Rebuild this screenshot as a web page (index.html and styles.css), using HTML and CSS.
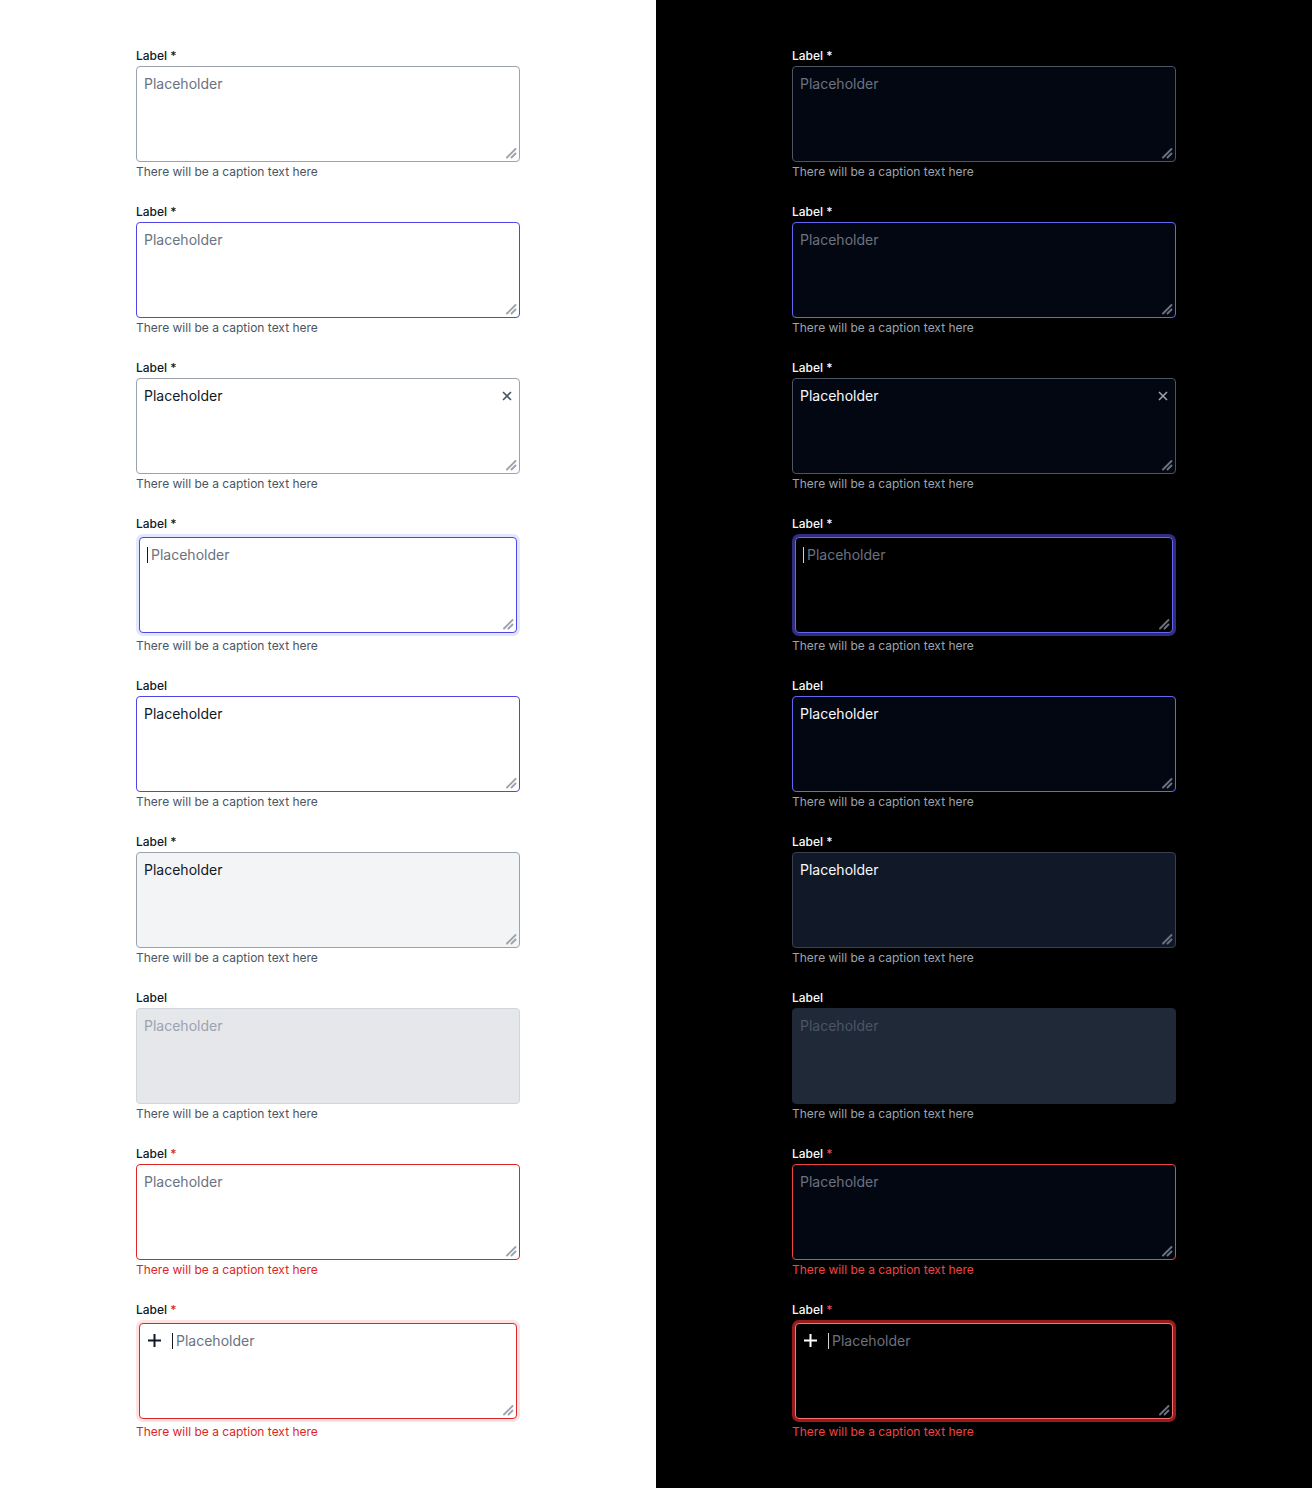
FILE: index.html
```html
<!DOCTYPE html>
<html lang="en">
<head>
<meta charset="utf-8">
<title>Textarea states</title>
<link rel="stylesheet" href="styles.css">
</head>
<body>
<div class="page">
  <section class="half light">
    <div class="field">
      <div class="label">Label <span class="req">*</span></div>
      <div class="box"><span class="ph">Placeholder</span><svg class="grip" width="12" height="12" viewBox="0 0 12 12"><path d="M10.5 2L2 10.5M10.5 6.5L6.5 10.5"/></svg></div>
      <div class="caption">There will be a caption text here</div>
    </div>
    <div class="field">
      <div class="label">Label <span class="req">*</span></div>
      <div class="box hover"><span class="ph">Placeholder</span><svg class="grip" width="12" height="12" viewBox="0 0 12 12"><path d="M10.5 2L2 10.5M10.5 6.5L6.5 10.5"/></svg></div>
      <div class="caption">There will be a caption text here</div>
    </div>
    <div class="field">
      <div class="label">Label <span class="req">*</span></div>
      <div class="box"><span class="val">Placeholder</span><svg class="clear" width="10" height="10" viewBox="0 0 10 10"><path d="M1 1L9 9M9 1L1 9"/></svg><svg class="grip" width="12" height="12" viewBox="0 0 12 12"><path d="M10.5 2L2 10.5M10.5 6.5L6.5 10.5"/></svg></div>
      <div class="caption">There will be a caption text here</div>
    </div>
    <div class="field">
      <div class="label">Label <span class="req">*</span></div>
      <div class="box focus"><span class="caret"></span><span class="ph">Placeholder</span><svg class="grip" width="12" height="12" viewBox="0 0 12 12"><path d="M10.5 2L2 10.5M10.5 6.5L6.5 10.5"/></svg></div>
      <div class="caption">There will be a caption text here</div>
    </div>
    <div class="field">
      <div class="label">Label</div>
      <div class="box hover"><span class="val">Placeholder</span><svg class="grip" width="12" height="12" viewBox="0 0 12 12"><path d="M10.5 2L2 10.5M10.5 6.5L6.5 10.5"/></svg></div>
      <div class="caption">There will be a caption text here</div>
    </div>
    <div class="field">
      <div class="label">Label <span class="req">*</span></div>
      <div class="box readonly"><span class="val">Placeholder</span><svg class="grip" width="12" height="12" viewBox="0 0 12 12"><path d="M10.5 2L2 10.5M10.5 6.5L6.5 10.5"/></svg></div>
      <div class="caption">There will be a caption text here</div>
    </div>
    <div class="field">
      <div class="label">Label</div>
      <div class="box disabled"><span class="ph">Placeholder</span></div>
      <div class="caption">There will be a caption text here</div>
    </div>
    <div class="field">
      <div class="label">Label <span class="req err">*</span></div>
      <div class="box error"><span class="ph">Placeholder</span><svg class="grip" width="12" height="12" viewBox="0 0 12 12"><path d="M10.5 2L2 10.5M10.5 6.5L6.5 10.5"/></svg></div>
      <div class="caption err">There will be a caption text here</div>
    </div>
    <div class="field">
      <div class="label">Label <span class="req err">*</span></div>
      <div class="box error-focus"><svg class="plus" width="13" height="13" viewBox="0 0 13 13"><path d="M6.5 0V13M0 6.5H13"/></svg><span class="caret"></span><span class="ph">Placeholder</span><svg class="grip" width="12" height="12" viewBox="0 0 12 12"><path d="M10.5 2L2 10.5M10.5 6.5L6.5 10.5"/></svg></div>
      <div class="caption err">There will be a caption text here</div>
    </div>
  </section>

  <section class="half dark">
    <div class="field">
      <div class="label">Label <span class="req">*</span></div>
      <div class="box"><span class="ph">Placeholder</span><svg class="grip" width="12" height="12" viewBox="0 0 12 12"><path d="M10.5 2L2 10.5M10.5 6.5L6.5 10.5"/></svg></div>
      <div class="caption">There will be a caption text here</div>
    </div>
    <div class="field">
      <div class="label">Label <span class="req">*</span></div>
      <div class="box hover"><span class="ph">Placeholder</span><svg class="grip" width="12" height="12" viewBox="0 0 12 12"><path d="M10.5 2L2 10.5M10.5 6.5L6.5 10.5"/></svg></div>
      <div class="caption">There will be a caption text here</div>
    </div>
    <div class="field">
      <div class="label">Label <span class="req">*</span></div>
      <div class="box"><span class="val">Placeholder</span><svg class="clear" width="10" height="10" viewBox="0 0 10 10"><path d="M1 1L9 9M9 1L1 9"/></svg><svg class="grip" width="12" height="12" viewBox="0 0 12 12"><path d="M10.5 2L2 10.5M10.5 6.5L6.5 10.5"/></svg></div>
      <div class="caption">There will be a caption text here</div>
    </div>
    <div class="field">
      <div class="label">Label <span class="req">*</span></div>
      <div class="box focus"><span class="caret"></span><span class="ph">Placeholder</span><svg class="grip" width="12" height="12" viewBox="0 0 12 12"><path d="M10.5 2L2 10.5M10.5 6.5L6.5 10.5"/></svg></div>
      <div class="caption">There will be a caption text here</div>
    </div>
    <div class="field">
      <div class="label">Label</div>
      <div class="box hover"><span class="val">Placeholder</span><svg class="grip" width="12" height="12" viewBox="0 0 12 12"><path d="M10.5 2L2 10.5M10.5 6.5L6.5 10.5"/></svg></div>
      <div class="caption">There will be a caption text here</div>
    </div>
    <div class="field">
      <div class="label">Label <span class="req">*</span></div>
      <div class="box readonly"><span class="val">Placeholder</span><svg class="grip" width="12" height="12" viewBox="0 0 12 12"><path d="M10.5 2L2 10.5M10.5 6.5L6.5 10.5"/></svg></div>
      <div class="caption">There will be a caption text here</div>
    </div>
    <div class="field">
      <div class="label">Label</div>
      <div class="box disabled"><span class="ph">Placeholder</span></div>
      <div class="caption">There will be a caption text here</div>
    </div>
    <div class="field">
      <div class="label">Label <span class="req err">*</span></div>
      <div class="box error"><span class="ph">Placeholder</span><svg class="grip" width="12" height="12" viewBox="0 0 12 12"><path d="M10.5 2L2 10.5M10.5 6.5L6.5 10.5"/></svg></div>
      <div class="caption err">There will be a caption text here</div>
    </div>
    <div class="field">
      <div class="label">Label <span class="req err">*</span></div>
      <div class="box error-focus"><svg class="plus" width="13" height="13" viewBox="0 0 13 13"><path d="M6.5 0V13M0 6.5H13"/></svg><span class="caret"></span><span class="ph">Placeholder</span><svg class="grip" width="12" height="12" viewBox="0 0 12 12"><path d="M10.5 2L2 10.5M10.5 6.5L6.5 10.5"/></svg></div>
      <div class="caption err">There will be a caption text here</div>
    </div>
  </section>
</div>
</body>
</html>
```

FILE: styles.css
```css
* { box-sizing: border-box; }

html, body {
  margin: 0;
  padding: 0;
}

body {
  font-family: Inter, "Noto Sans", "Liberation Sans", sans-serif;
  -webkit-font-smoothing: antialiased;
}

.page {
  display: grid;
  grid-template-columns: 656px 656px;
  width: 1312px;
  min-height: 1488px;
}

.half {
  display: flex;
  flex-direction: column;
  gap: 24px;
  padding: 48px 136px;
}

.field {
  display: flex;
  flex-direction: column;
  gap: 2px;
  width: 384px;
}

.label {
  font-size: 12px;
  line-height: 16px;
  font-weight: 500;
}

.caption {
  font-size: 12px;
  line-height: 16px;
  font-weight: 400;
}

.box {
  position: relative;
  display: flex;
  align-items: flex-start;
  align-self: stretch;
  height: 96px;
  padding: 7px 7px;
  border: 1px solid;
  border-radius: 4px;
  font-size: 14px;
  line-height: 20px;
}

.box.focus,
.box.error-focus {
  margin: 3px;
}

.ph, .val { white-space: nowrap; }

.caret {
  display: inline-block;
  width: 1px;
  height: 16px;
  margin-top: 2px;
  margin-right: 3px;
}

.plus {
  margin-top: 3px;
  margin-left: 1px;
  margin-right: 11px;
  fill: none;
  stroke-width: 2;
}

.grip {
  position: absolute;
  right: 2px;
  bottom: 2px;
  fill: none;
  stroke-width: 1.9;
  stroke-linecap: round;
}

.clear {
  position: absolute;
  right: 7px;
  top: 12px;
  fill: none;
  stroke-width: 1.6;
}

/* ---------- light ---------- */
.light { background: #ffffff; }
.light .label { color: #111827; }
.light .req { color: #111827; }
.light .req.err { color: #dc2626; }
.light .caption { color: #4b5563; }
.light .caption.err { color: #dc2626; }
.light .box { background: #ffffff; border-color: #9ca3af; }
.light .ph { color: #6b7280; }
.light .val { color: #111827; }
.light .caret { background: #111827; }
.light .plus { stroke: #111827; }
.light .grip { stroke: #9ca3af; }
.light .clear { stroke: #4b5563; }
.light .box.hover { border-color: #4f46e5; }
.light .box.focus { border-color: #4f46e5; box-shadow: 0 0 0 3px #e0e7ff; }
.light .box.readonly { background: #f3f4f6; }
.light .box.disabled { background: #e5e7eb; border-color: #d1d5db; }
.light .box.disabled .ph { color: #9ca3af; }
.light .box.error { border-color: #dc2626; }
.light .box.error-focus { border-color: #dc2626; box-shadow: 0 0 0 3px #fee2e2; }

/* ---------- dark ---------- */
.dark { background: #000000; }
.dark .label { color: #f9fafb; }
.dark .req { color: #f9fafb; }
.dark .req.err { color: #ef4444; }
.dark .caption { color: #9ca3af; }
.dark .caption.err { color: #ef4444; }
.dark .box { background: #030712; border-color: #4b5563; }
.dark .ph { color: #6b7280; }
.dark .val { color: #f9fafb; }
.dark .caret { background: #d1d5db; }
.dark .plus { stroke: #ffffff; }
.dark .grip { stroke: #6b7280; }
.dark .clear { stroke: #9ca3af; }
.dark .box.hover { border-color: #6366f1; }
.dark .box.focus { background: #000000; border-color: #6366f1; box-shadow: 0 0 0 3px #312e81; }
.dark .box.readonly { background: #111827; border-color: #374151; }
.dark .box.disabled { background: #1f2937; border-color: #1f2937; }
.dark .box.disabled .ph { color: #4b5563; }
.dark .box.error { border-color: #ef4444; }
.dark .box.error-focus { background: #000000; border-color: #f87171; box-shadow: 0 0 0 3px #991b1b; }
```
